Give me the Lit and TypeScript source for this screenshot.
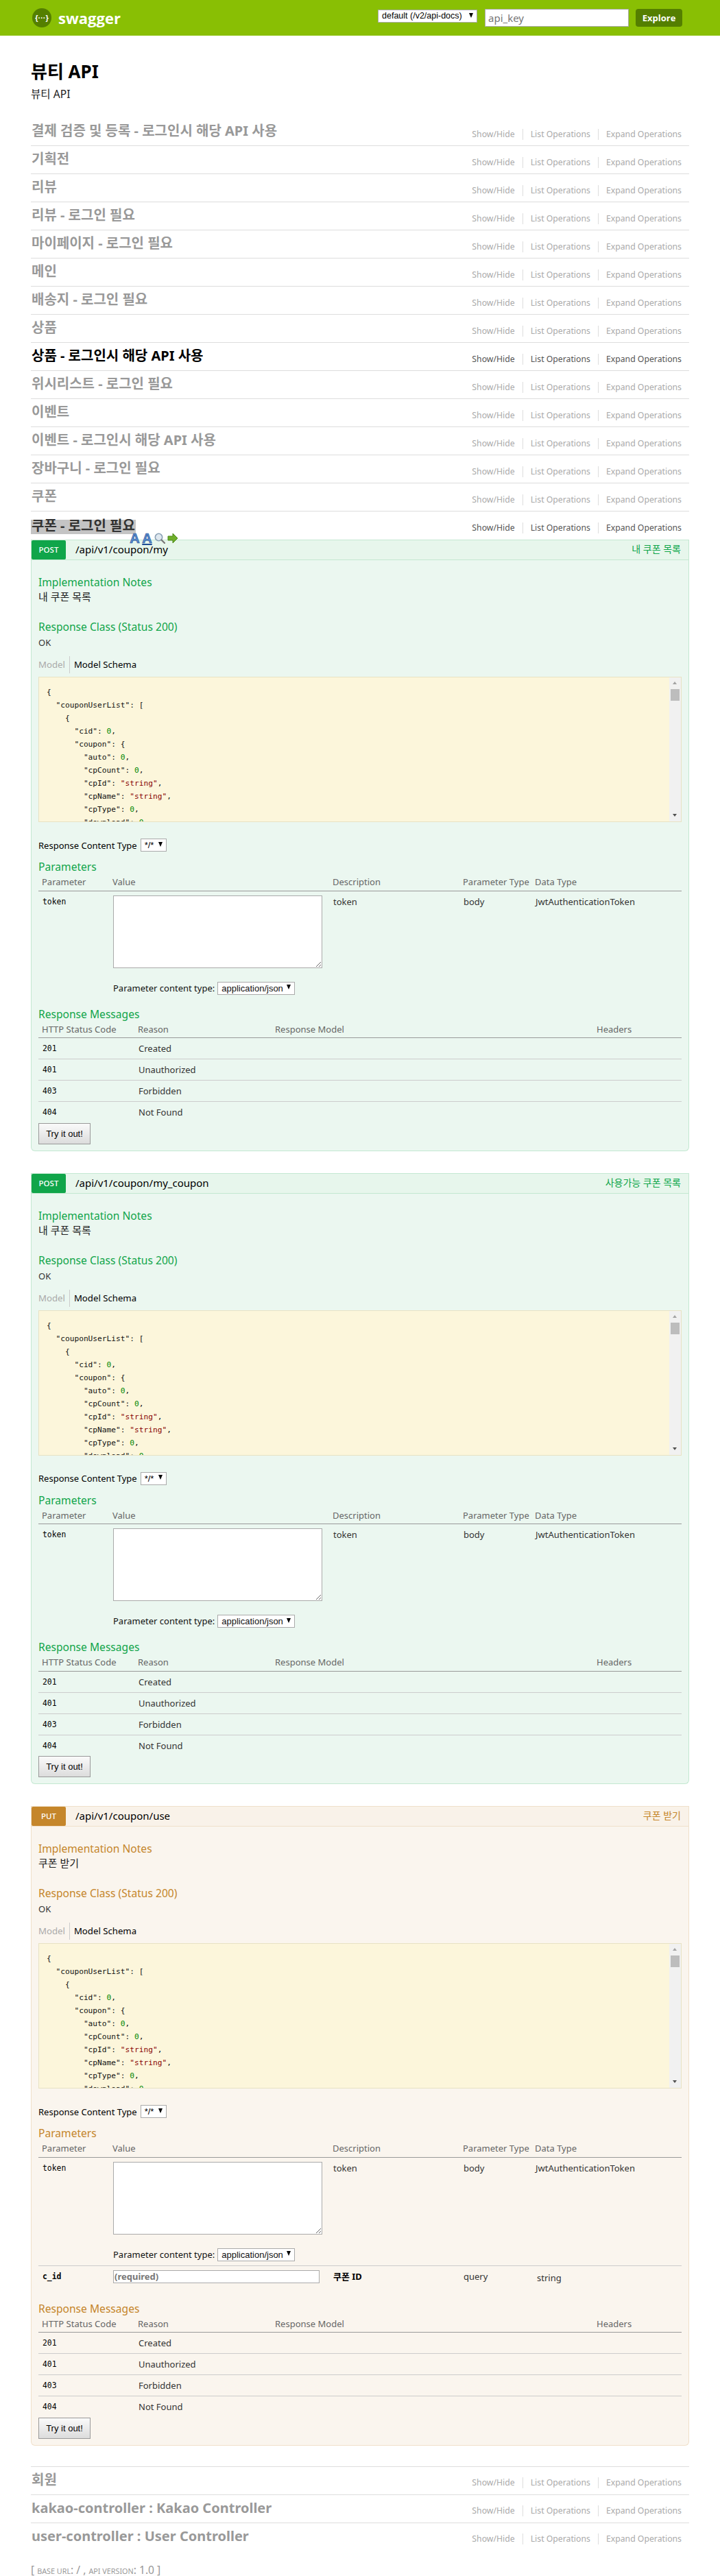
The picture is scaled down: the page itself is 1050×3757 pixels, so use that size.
import { LitElement, html, css } from 'lit'
import { customElement } from 'lit/decorators.js'

interface Group { name: string; dark?: boolean; last?: boolean }
interface Op { method: string; path: string; summary: string; notes: string; extra?: boolean }

const GROUPS_TOP: Group[] = [
  { name: '결제 검증 및 등록 - 로그인시 해당 API 사용' },
  { name: '기획전' },
  { name: '리뷰' },
  { name: '리뷰 - 로그인 필요' },
  { name: '마이페이지 - 로그인 필요' },
  { name: '메인' },
  { name: '배송지 - 로그인 필요' },
  { name: '상품' },
  { name: '상품 - 로그인시 해당 API 사용', dark: true },
  { name: '위시리스트 - 로그인 필요' },
  { name: '이벤트' },
  { name: '이벤트 - 로그인시 해당 API 사용' },
  { name: '장바구니 - 로그인 필요' },
  { name: '쿠폰' },
]
const GROUPS_BOTTOM: Group[] = [
  { name: '회원' },
  { name: 'kakao-controller : Kakao Controller' },
  { name: 'user-controller : User Controller', last: true },
]
const OPS: Op[] = [
  { method: 'POST', path: '/api/v1/coupon/my', summary: '내 쿠폰 목록', notes: '내 쿠폰 목록' },
  { method: 'POST', path: '/api/v1/coupon/my_coupon', summary: '사용가능 쿠폰 목록', notes: '내 쿠폰 목록' },
  { method: 'PUT', path: '/api/v1/coupon/use', summary: '쿠폰 받기', notes: '쿠폰 받기', extra: true },
]
const MESSAGES = [['201', 'Created'], ['401', 'Unauthorized'], ['403', 'Forbidden'], ['404', 'Not Found']]

@customElement('app-root')
export class AppRoot extends LitElement {
  static styles = css`
    :host {
      display: block;
      background: #fff;
      font-family: "Noto Sans", "Noto Sans CJK KR", sans-serif;
      font-size: 13px;
      color: #000;
    }
    * { box-sizing: border-box; }

    .header {
      height: 52px;
      background: #89bf04;
      display: flex;
      align-items: center;
      padding: 0 55px 0 47px;
    }
    .logo { width: 28px; height: 28px; border-radius: 50%; background: #547f00; display: flex; align-items: center; justify-content: center; color: #fff; font: 700 11px "Liberation Sans", sans-serif; }
    .brand { margin-left: 10px; color: #fff; font: 700 22px/28px "Open Sans", sans-serif; }
    .spacer { flex: 1; }
    .header .sel { align-self: flex-start; margin: 14px 11px 0 0; width: 145px; height: 19px; font-size: 12.5px; }
    .key {
      width: 210px; height: 26px; border: 1px solid #aaa; padding: 0 4px;
      font: 15px "Noto Sans", sans-serif; color: #777; background: #fff; display: flex; align-items: center;
    }
    .explore {
      margin-left: 10px; width: 68px; height: 26px; border: 0; border-radius: 4px;
      background: #547f00; color: #fff; font: 700 13px "Open Sans", sans-serif;
    }

    .main { padding: 0 45px; }
    h1 { margin: 0; padding-top: 35px; font: 700 26px/34px "Noto Sans", "Noto Sans CJK KR", sans-serif; }
    .sub { margin-top: 6px; font-size: 15.6px; line-height: 20px; color: #222; height: 45px; }

    .group {
      height: 41px; border-bottom: 1px solid #ddd; display: flex; justify-content: space-between; position: relative;
    }
    .group.open, .group.last { border-bottom: 0; }
    .group-top { border-top: 1px solid #ddd; }
    .name { margin: 8px 0 0 1px; font-size: 20px; line-height: 22px; font-weight: 700; color: #999; height: 22px; }
    .dark .name { color: #000; }
    .open .name { margin: 10px 0 0; height: 21px; }
    .picked { display: inline-block; background: #c4c4c4; color: #333; padding: 0 1px 3px; line-height: 18px; }
    .actions { display: flex; align-items: center; margin-top: 15px; height: 17px; padding-right: 11px; font-size: 12.25px; color: #aaa; }
    .dark .actions { color: #555; }
    .actions span { padding: 0 11px; border-right: 1px solid #ddd; line-height: 16px; }
    .actions span:last-child { border-right: 0; padding-right: 0; }

    .float-icons { position: absolute; left: 144px; top: 31px; display: flex; gap: 3px; align-items: center; height: 16px; z-index: 2; }
    .float-a { font: 700 20px/16px "Liberation Sans", sans-serif; color: #5b8fd0; -webkit-text-stroke: 0.7px #1f4c94; width: 15px; text-align: center; }
    .float-a.under { text-decoration: underline; text-decoration-thickness: 2px; text-decoration-color: #1f4c94; }

    .op { margin-bottom: 32px; }
    .op.last { margin-bottom: 30px; }
    .op-head {
      height: 30px; display: flex; align-items: flex-start; border: 1px solid; padding: 0;
    }
    .badge { width: 50px; height: 28px; border-radius: 2px; color: #fff; font-size: 11.5px; line-height: 28px; text-align: center; font-weight: 500; }
    .path { margin-left: 14px; font-size: 15px; line-height: 26px; color: #000; flex: 1; }
    .summary { margin-right: 11px; font-size: 14px; line-height: 26px; }
    .op-body {
      border: 1px solid; border-top: 0; border-radius: 0 0 6px 6px; padding: 22px 10px 9px;
    }
    .post .op-head, .post .op-body { border-color: #c3e8d1; }
    .post .op-head { background: #e7f6ec; }
    .post .op-body { background: #ebf7f0; }
    .post .badge { background: #10a54a; }
    .post .summary, .post h4 { color: #10a54a; }
    .put .op-head, .put .op-body { border-color: #f0e0ca; }
    .put .op-head { background: #f9f2e9; }
    .put .op-body { background: #faf5ee; }
    .put .badge { background: #c5862b; }
    .put .summary, .put h4 { color: #c5862b; }

    h4 { margin: 0; font-size: 15.6px; line-height: 20px; font-weight: 400; }
    .notes { margin: 2px 0 25px; font-size: 15px; line-height: 18px; color: #222; }
    .ok { margin: 4px 0 14px; line-height: 18px; color: #333; }
    .tabs { display: flex; height: 25px; align-items: center; margin-top: -3px; font-size: 13.2px; }
    .tab { padding-right: 6px; color: #aaa; border-right: 1px solid #ccc; line-height: 25px; }
    .tab.on { color: #000; border: 0; padding-left: 6px; }
    .snippet {
      margin-top: 5px; height: 212px; border: 1px solid #e8e2c4; background: #fcf6db; position: relative; overflow: hidden;
    }
    pre {
      margin: 0; padding: 12px 0 0 11px; font: 11.2px/19px "DejaVu Sans Mono", monospace; color: #111;
    }
    .s { color: #800; }
    .n { color: #080; }
    .bar { position: absolute; right: 0; top: 0; bottom: 0; width: 17px; background: #f1f1f1; }
    .thumb { position: absolute; left: 2px; top: 17px; width: 13px; height: 17px; background: #bdbdbd; }
    .up, .down { position: absolute; left: 5px; width: 0; height: 0; border-left: 3.5px solid transparent; border-right: 3.5px solid transparent; }
    .up { top: 6px; border-bottom: 4px solid #a3a3a3; }
    .down { bottom: 7px; border-top: 4px solid #505050; }

    .ctype { display: flex; align-items: center; height: 19px; margin-top: 24px; gap: 5px; }
    .sel {
      display: inline-flex; align-items: center; justify-content: space-between; border: 1px solid #aaa; background: #fff;
      height: 19px; padding: 0 5px; font-size: 13px; line-height: 17px; white-space: nowrap; font-family: "Liberation Sans", sans-serif;
    }
    .sel::after { content: ''; border-left: 3px solid transparent; border-right: 3px solid transparent; border-top: 7px solid #000; margin: 0 0 3px 5px; }
    .ctype .sel { width: 38px; }
    .h-params { margin-top: 12px; }

    table { width: 100%; border-collapse: collapse; table-layout: fixed; }
    th { padding: 0 5px; height: 25px; text-align: left; font-weight: 400; color: #666; font-size: 13px; line-height: 18px; border-bottom: 1px solid #999; white-space: nowrap; }
    td { padding: 0; vertical-align: top; color: #333; line-height: 18px; }
    .code { font: 11.4px/18px "DejaVu Sans Mono", monospace; color: #000; padding-left: 6px; }
    .params th:nth-child(1) { width: 103px; }
    .params th:nth-child(2) { width: 321px; }
    .params th:nth-child(3) { width: 190px; }
    .params th:nth-child(4) { width: 105px; }
    .params td { padding-top: 6px; }
    .params .text { padding-left: 6px; }
    .params td.value { padding-left: 6px; padding-bottom: 6px; }
    .params td.str { padding-top: 8px; padding-left: 8px; }
    .params .ruled td { border-bottom: 1px solid #ccc; }
    .params td b { color: #000; }
    textarea { display: block; width: 305px; height: 106px; border: 1px solid #aaa; background: #fff; margin: 0 0 20px 0; padding: 2px; }
    .ptype { display: flex; align-items: center; gap: 4px; height: 19px; line-height: 19px; color: #111; white-space: nowrap; }
    .ptype .sel { width: 113px; }
    input { display: block; width: 301px; height: 19px; border: 1px solid #aaa; background: #fff; padding: 0 1px; font: 700 13px "Noto Sans", sans-serif; }
    input::placeholder { color: #777; opacity: 1; }
    .gap-msgs { height: 12px; }
    .extra-gap { height: 21px; }

    .msgs th:nth-child(1) { width: 140px; }
    .msgs th:nth-child(2) { width: 200px; }
    .msgs th:nth-child(3) { width: 469px; }
    .msgs td { height: 31px; border-bottom: 1px solid #ccc; vertical-align: middle; padding-left: 6px; padding-top: 0; }
    .msgs tr:last-child td { border-bottom: 0; }
    .try {
      display: block; width: 76px; height: 31px; padding: 0; border: 1px solid #999; border-radius: 0;
      background: linear-gradient(#fafafa, #dcdcdc); color: #000; font: 13px "Liberation Sans", sans-serif;
    }

    .footer { padding-top: 16px; height: 36px; font-size: 15.6px; line-height: 22px; color: #999; }
    .footer small { font-size: 10.8px; text-transform: uppercase; }
  `

  private group(g: Group, open = false) {
    return html`
      <div class="group ${g.dark || open ? 'dark' : ''} ${open ? 'open' : ''} ${g.last ? 'last' : ''}">
        <div class="name">${open ? html`<span class="picked">${g.name}</span>` : g.name}</div>
        <div class="actions"><span>Show/Hide</span><span>List Operations</span><span>Expand Operations</span></div>
        ${open ? this.floatIcons() : ''}
      </div>
    `
  }

  private floatIcons() {
    return html`
      <div class="float-icons">
        <span class="float-a">A</span>
        <span class="float-a under">A</span>
        <svg width="16" height="16" viewBox="0 0 16 16">
          <circle cx="6.5" cy="6.5" r="5.2" fill="#dfe8ef" stroke="#8aa0b5" stroke-width="1.6" />
          <path d="M10.5 10.5 15 15" stroke="#777" stroke-width="2.2" stroke-linecap="round" />
        </svg>
        <svg width="16" height="16" viewBox="0 0 16 16">
          <path d="M1 5h7V1l7 7-7 7v-4H1z" fill="#6fae2a" stroke="#4a8a18" stroke-width="1" stroke-linejoin="round" />
        </svg>
      </div>
    `
  }

  private snippet() {
    return html`<pre>{
  "couponUserList": [
    {
      "cid": <span class="n">0</span>,
      "coupon": {
        "auto": <span class="n">0</span>,
        "cpCount": <span class="n">0</span>,
        "cpId": <span class="s">"string"</span>,
        "cpName": <span class="s">"string"</span>,
        "cpType": <span class="n">0</span>,
        "download": <span class="n">0</span>,</pre>`
  }

  private operation(op: Op, last: boolean) {
    return html`
      <div class="op ${op.method === 'PUT' ? 'put' : 'post'} ${last ? 'last' : ''}">
        <div class="op-head">
          <div class="badge">${op.method}</div>
          <div class="path">${op.path}</div>
          <div class="summary">${op.summary}</div>
        </div>
        <div class="op-body">
          <h4>Implementation Notes</h4>
          <div class="notes">${op.notes}</div>
          <h4>Response Class (Status 200)</h4>
          <div class="ok">OK</div>
          <div class="tabs"><span class="tab">Model</span><span class="tab on">Model Schema</span></div>
          <div class="snippet">
            ${this.snippet()}
            <div class="bar"><i class="up"></i><i class="thumb"></i><i class="down"></i></div>
          </div>
          <div class="ctype">Response Content Type <span class="sel">*/*</span></div>
          <h4 class="h-params">Parameters</h4>
          <table class="params">
            <thead><tr><th>Parameter</th><th>Value</th><th>Description</th><th>Parameter Type</th><th>Data Type</th></tr></thead>
            <tbody>
              <tr class="${op.extra ? 'ruled' : ''}">
                <td class="code">token</td>
                <td class="value">
                  <textarea></textarea>
                  <div class="ptype">Parameter content type: <span class="sel">application/json</span></div>
                </td>
                <td class="text">token</td>
                <td class="text">body</td>
                <td class="text">JwtAuthenticationToken</td>
              </tr>
              ${op.extra ? html`
                <tr>
                  <td class="code"><b>c_id</b></td>
                  <td class="value"><input placeholder="(required)" /></td>
                  <td class="text"><b>쿠폰 ID</b></td>
                  <td class="text">query</td>
                  <td class="text str">string</td>
                </tr>` : ''}
            </tbody>
          </table>
          <div class="${op.extra ? 'extra-gap' : 'gap-msgs'}"></div>
          <h4>Response Messages</h4>
          <table class="msgs">
            <thead><tr><th>HTTP Status Code</th><th>Reason</th><th>Response Model</th><th>Headers</th></tr></thead>
            <tbody>
              ${MESSAGES.map(([code, reason]) => html`
                <tr><td class="code">${code}</td><td>${reason}</td><td></td><td></td></tr>`)}
            </tbody>
          </table>
          <button class="try">Try it out!</button>
        </div>
      </div>
    `
  }

  render() {
    return html`
      <div class="header">
        <div class="logo">{···}</div>
        <div class="brand">swagger</div>
        <div class="spacer"></div>
        <span class="sel">default (/v2/api-docs)</span>
        <div class="key">api_key</div>
        <button class="explore">Explore</button>
      </div>
      <div class="main">
        <h1>뷰티 API</h1>
        <div class="sub">뷰티 API</div>
        ${GROUPS_TOP.map(g => this.group(g))}
        ${this.group({ name: '쿠폰 - 로그인 필요' }, true)}
        ${OPS.map((op, i) => this.operation(op, i === OPS.length - 1))}
        <div class="group-top">${this.group(GROUPS_BOTTOM[0])}</div>
        ${this.group(GROUPS_BOTTOM[1])}
        ${this.group(GROUPS_BOTTOM[2])}
        <div class="footer">[ <small>base url</small>: / , <small>api version</small>: 1.0 ]</div>
      </div>
    `
  }
}
